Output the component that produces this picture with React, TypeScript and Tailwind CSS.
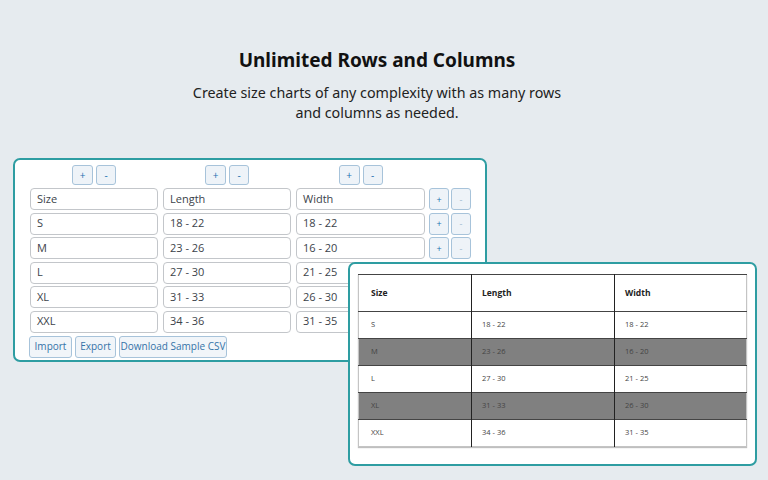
const rows = [
	["Size", "Length", "Width"],
	["S", "18 - 22", "18 - 22"],
	["M", "23 - 26", "16 - 20"],
	["L", "27 - 30", "21 - 25"],
	["XL", "31 - 33", "26 - 30"],
	["XXL", "34 - 36", "31 - 35"],
]

const PlusMinus = () => (
	<div className="flex justify-center gap-[3px]">
		<button className="w-[21px] h-[20px] rounded-[3px] border border-[#a7c3da] bg-[#eef3f8] text-[10px] leading-none text-[#2271b1]">
			+
		</button>
		<button className="w-[20px] h-[20px] rounded-[3px] border border-[#a7c3da] bg-[#eef3f8] text-[10px] leading-none text-[#2271b1]">
			-
		</button>
	</div>
)

const Cell = ({ value }: { value: string }) => (
	<div className="h-[22px] rounded-[4px] border border-[#c3c6ca] bg-white px-[6px] flex items-center text-[11px] text-[#3c434a]">
		{value}
	</div>
)

const Editor = () => {
	return (
		<div className="ml-[13px] mt-[35px] w-[474px] h-[204px] rounded-[7px] border-2 border-[#2e9da2] bg-white pl-[15px] pt-[4px]">
			<div className="grid grid-cols-[128px_128px_129px_45px] gap-x-[5px]">
				<div className="pt-[1px]">
					<PlusMinus />
				</div>
				<div className="pt-[1px]">
					<PlusMinus />
				</div>
				<div className="pt-[1px]">
					<PlusMinus />
				</div>
				<div />
			</div>
			<div className="mt-[3px] grid grid-cols-[128px_128px_129px_45px] gap-x-[5px] gap-y-[2.5px]">
				{rows.map((r, i) => (
					<>
						<Cell key={`a${i}`} value={r[0]} />
						<Cell key={`b${i}`} value={r[1]} />
						<Cell key={`c${i}`} value={r[2]} />
						<div key={`d${i}`} className="flex gap-[2px] -ml-[1px]">
							{i < 3 && (
								<>
									<button className="w-[20px] h-[22px] rounded-[3px] border border-[#a7c3da] bg-[#eef3f8] text-[9px] leading-none text-[#2271b1]">
										+
									</button>
									<button className="w-[20px] h-[22px] rounded-[3px] border border-[#a7c3da] bg-[#eef3f8] text-[9px] leading-none text-[#9fb9cf]">
										-
									</button>
								</>
							)}
						</div>
					</>
				))}
			</div>
			<div className="mt-[3px] -ml-[1px] flex gap-[3px]">
				<button className="w-[43px] h-[22px] rounded-[3px] border border-[#a7c3da] bg-[#f1f5f9] text-[10px] whitespace-nowrap text-[#3573a8]">
					Import
				</button>
				<button className="w-[41px] h-[22px] rounded-[3px] border border-[#a7c3da] bg-[#f1f5f9] text-[10px] whitespace-nowrap text-[#3573a8]">
					Export
				</button>
				<button className="w-[108px] h-[22px] rounded-[3px] border border-[#a7c3da] bg-[#f1f5f9] text-[10px] whitespace-nowrap text-[#3573a8]">
					Download Sample CSV
				</button>
			</div>
		</div>
	)
}

const Preview = () => {
	return (
		<div className="absolute left-[348px] top-[262px] w-[409px] h-[204px] rounded-[7px] border-2 border-[#2e9da2] bg-white pl-[8px] pt-[10px]">
			<table className="w-[389px] border-collapse border border-[#c4c4c4] shadow-[0_1px_1px_rgba(0,0,0,0.25)]">
				<tbody>
					{rows.map((r, i) => (
						<tr
							key={i}
							className={`${i === 0 ? "h-[37px] font-bold text-[8.5px] text-[#222]" : "h-[27px] text-[7.5px] text-[#444]"} ${
								i === 2 || i === 4 ? "bg-[#808080]" : "bg-white"
							} border-t border-[#444]`}
						>
							<td className="w-[113px] pl-[12px] border-r border-[#222]">{r[0]}</td>
							<td className="w-[143px] pl-[10px] border-r border-[#222]">{r[1]}</td>
							<td className="pl-[10px]">{r[2]}</td>
						</tr>
					))}
				</tbody>
			</table>
		</div>
	)
}

export default function App() {
	return (
		<div
			className="relative w-[768px] h-[480px] overflow-hidden bg-[#e6ebef]"
			style={{ fontFamily: "'Open Sans', 'Noto Sans', sans-serif" }}
		>
			<div className="pt-[46px] pr-[14px] text-center text-[#111]" style={{ fontFamily: "'Noto Sans', Lato, sans-serif" }}>
				<h1 className="text-[19px] font-bold leading-[28px]">Unlimited Rows and Columns</h1>
				<p className="mt-[9px] text-[14.3px] leading-[20px] text-[#222]">
					Create size charts of any complexity with as many rows
					<br />
					and columns as needed.
				</p>
			</div>
			<Editor />
			<Preview />
		</div>
	)
}
